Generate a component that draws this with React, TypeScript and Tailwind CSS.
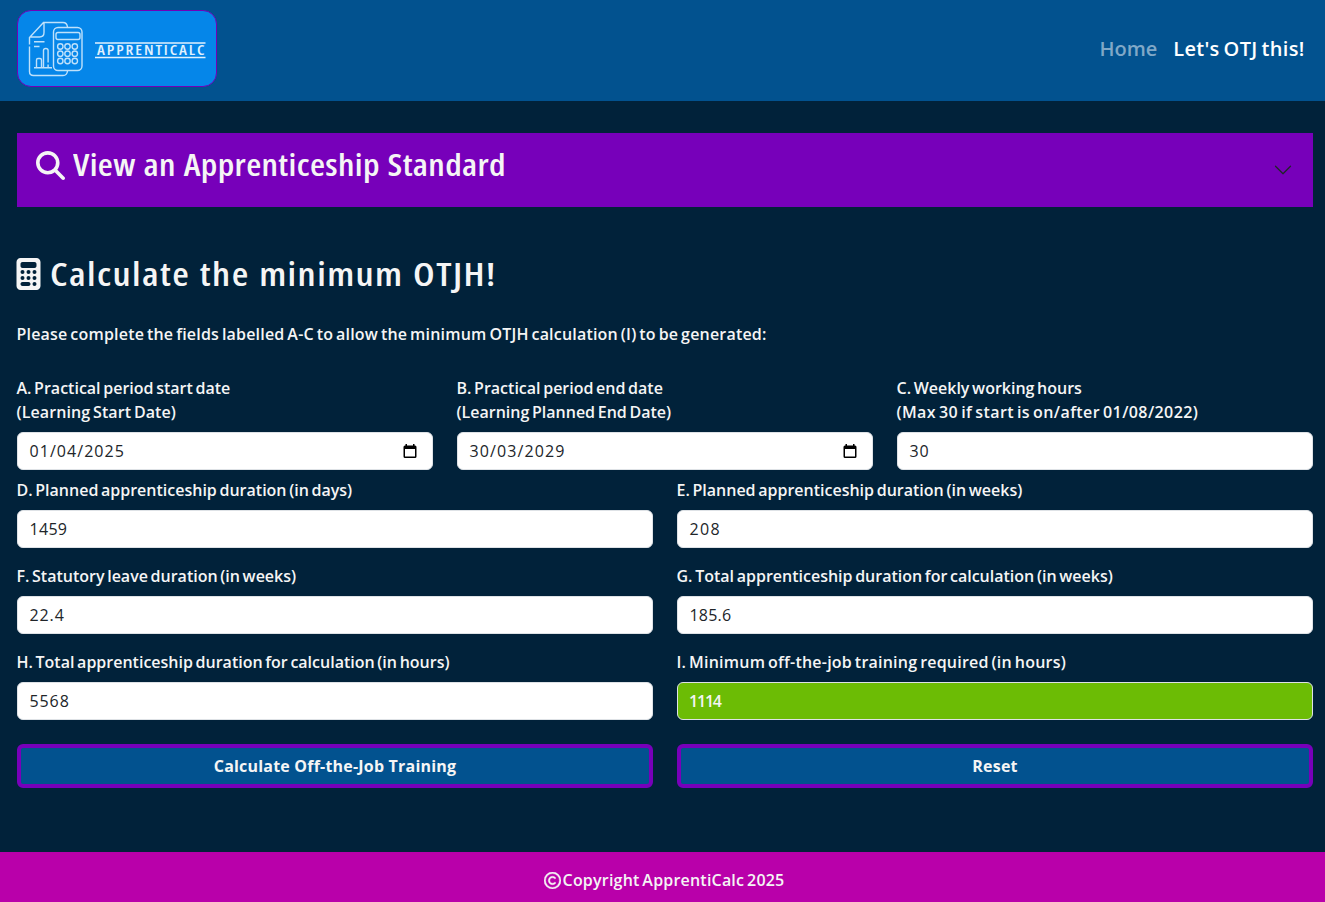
import type { ReactNode } from "react";
import { FaCalculator, FaMagnifyingGlass, FaRegCopyright } from "react-icons/fa6";

function Logo() {
  return (
    <a href="#" aria-label="ApprentiCalc" className="block h-[77px] w-[200px] rounded-[14px] border border-[#7200b8] bg-[#0586e9]">
      <svg viewBox="0 0 198 75" className="block h-[75px] w-[198px]" fill="none" stroke="#bfe1fb" strokeWidth="1.4">
        <path d="M11.500 33.500V26.500L25.500 11.500H45q4 0 4.500 4.500M11.500 35.500V60.500q0 4 4 4H45q4 0 4.500-4.500M12 26H21.500q4.500 0 4.500-4.500V12" />
        <rect x="35.500" y="16.500" width="28.500" height="43" rx="4.500" />
        <rect x="38" y="21.500" width="24" height="7" rx="2" />
        <path d="M16 30.700H26.500M16 35.500H21.500M16 56.800H34M18.500 56.500V49q0-1.500 1.500-1.500h2q1.500 0 1.500 1.500v7.500M25.500 56.500V39.500q0-2 2.300-2t2.300 2v12M30.100 53.500v3" />
        {[35.5, 42.7, 50].map((y) =>
          [42.3, 49.5, 56.8].map((x) => <circle key={`${x}-${y}`} cx={x} cy={y} r="2.700" />),
        )}
        <path stroke="#e0f1fe" strokeWidth="1.6" d="M77 32H187.500M77 46.500H187.500" />
        <g transform="translate(79 44.300) scale(1.12 1)">
          <text x="0" y="0" textLength="96" lengthAdjust="spacing" fill="#e0f1fe" stroke="none" className="font-['Open_Sans'] text-[14.500px] font-semibold [font-stretch:75%] [word-spacing:0]">APPRENTICALC</text>
        </g>
      </svg>
    </a>
  );
}

function CalendarIcon() {
  return (
    <svg viewBox="0 0 14 15" className="h-[15px] w-[14px]" fill="#000">
      <path d="M2.500 0H4v1.500h6V0h1.500v1.500H12q1.500 0 1.500 1.500v9.500q0 1.500-1.500 1.500H2Q.5 14 .5 12.500V3Q.5 1.500 2 1.500h.5ZM2 5v7.500h10V5Z" />
    </svg>
  );
}

type FieldProps = { label: ReactNode; value: string; date?: boolean; result?: boolean; valueClass?: string };

function Field({ label, value, date = false, result = false, valueClass = "tracking-[0.9px]" }: FieldProps) {
  return (
    <div>
      <div className="-ml-[0.5px] mb-2 whitespace-nowrap leading-6">{label}</div>
      <div
        className={`flex h-[38px] items-center justify-between rounded-md border border-[#dee2e6] pl-[11.5px] pr-[15px] ${
          result ? "bg-[#6cbc05] text-[#f5f5f5]" : "bg-white font-normal text-[#212529]"
        }`}
      >
        <span className={valueClass}>{value}</span>
        {date && <CalendarIcon />}
      </div>
    </div>
  );
}

function ActionButton({ children }: { children: ReactNode }) {
  return (
    <button className="h-11 rounded-md border-4 border-[#7700ba] bg-[#02528f] text-center font-bold leading-6 tracking-[0.2px]">
      {children}
    </button>
  );
}

export default function App() {
  return (
    <div className="flex h-[902px] w-full flex-col overflow-hidden bg-[#01223a] font-['Open_Sans',sans-serif] text-base font-semibold text-[#f5f5f5] [word-spacing:-1.5px]">
      <header className="flex h-[101px] shrink-0 items-start justify-between bg-[#02528f] pl-[17px] pr-[20.5px] pt-[10px]">
        <Logo />
        <nav className="flex gap-4 pt-6 text-xl leading-[30px]">
          <a href="#" className="text-[#80a8c7]">Home</a>
          <a href="#" className="tracking-[0.3px] text-white">Let's OTJ this!</a>
        </nav>
      </header>

      <main className="flex-1 pl-[17px] pr-3 pt-8">
        <button className="flex h-[74px] w-full items-center justify-between bg-[#7700ba] pl-[19px] pr-5">
          <span className="flex items-center gap-2 pb-[9px]">
            <FaMagnifyingGlass className="size-[29px]" />
            <span className="-mt-[3px] origin-left scale-x-[1.117] whitespace-nowrap text-[31px] leading-[38px] tracking-[0.3px] [font-stretch:75%] [word-spacing:1px]">View an Apprenticeship Standard</span>
          </span>
          <svg viewBox="0 0 16 16" className="size-5" fill="none" stroke="#212529" strokeLinecap="round" strokeLinejoin="round">
            <path d="m2 5 6 6 6-6" />
          </svg>
        </button>

        <h1 className="-ml-px mt-12 flex h-[38px] items-center gap-[9px] text-[32px]">
          <FaCalculator className="h-8 w-[25px]" />
          <span className="origin-left scale-x-[1.188] whitespace-nowrap tracking-[1.2px] [font-stretch:75%] [word-spacing:1px]">Calculate the minimum OTJH!</span>
        </h1>
        <p className="-ml-[0.5px] mt-[29px] whitespace-nowrap leading-6 tracking-[0.2px]">
          Please complete the fields labelled A-C to allow the minimum OTJH calculation (I) to be generated:
        </p>

        <div className="mt-[30px] grid grid-cols-3 gap-6">
          <Field label={<>A. Practical period start date<br /><span className="tracking-[0.1px]">(Learning Start Date)</span></>} value="01/04/2025" valueClass="tracking-[1.05px]" date />
          <Field label={<>B. Practical period end date<br />(Learning Planned End Date)</>} value="30/03/2029" valueClass="tracking-[1.1px]" date />
          <Field label={<>C. Weekly working hours<br /><span className="tracking-[0.4px]">(Max 30 if start is on/after 01/08/2022)</span></>} value="30" />
        </div>
        <div className="mt-2 grid grid-cols-2 gap-x-6 gap-y-4">
          <Field label="D. Planned apprenticeship duration (in days)" value="1459" valueClass="tracking-[0.3px]" />
          <Field label="E. Planned apprenticeship duration (in weeks)" value="208" valueClass="tracking-[1.3px]" />
          <Field label="F. Statutory leave duration (in weeks)" value="22.4" />
          <Field label="G. Total apprenticeship duration for calculation (in weeks)" value="185.6" valueClass="tracking-[0.2px]" />
          <Field label="H. Total apprenticeship duration for calculation (in hours)" value="5568" />
          <Field label={<span className="tracking-[0.22px]">I. Minimum off-the-job training required (in hours)</span>} value="1114" valueClass="-ml-[0.5px] tracking-[-1.2px]" result />
        </div>
        <div className="mt-6 grid grid-cols-2 gap-6">
          <ActionButton>Calculate Off-the-Job Training</ActionButton>
          <ActionButton>Reset</ActionButton>
        </div>
      </main>

      <footer className="flex h-[50px] shrink-0 items-center justify-center gap-[2px] bg-[#b900aa] pl-[3px] pt-[6px]">
        <FaRegCopyright className="size-[17px] stroke-current stroke-[12px]" />
        <span className="tracking-[0.2px]">Copyright ApprentiCalc 2025</span>
      </footer>
    </div>
  );
}
